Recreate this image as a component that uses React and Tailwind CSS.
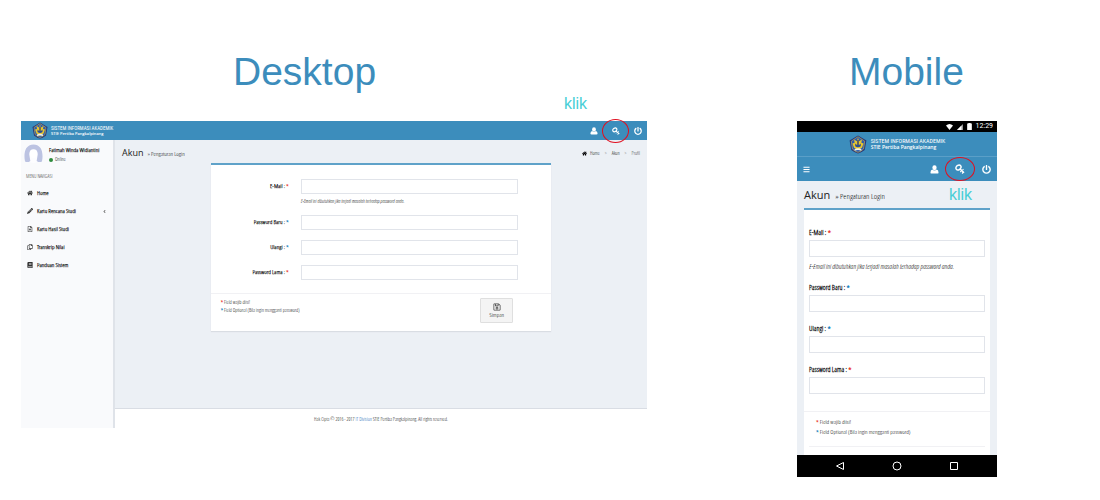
import React from "react";
import {
  FaAngleLeft, FaBars, FaBook, FaHome, FaPencilAlt, FaPowerOff,
  FaRegCopy, FaRegFileAlt, FaRegSave, FaUser,
} from "react-icons/fa";

function Emblem({ className }) {
  return (
    <svg viewBox="0 0 32 34" className={className} aria-hidden="true">
      <path d="M16 1 31 10 28 27Q22 32 16 33 10 32 4 27L1 10Z" fill="#23337a" />
      <path d="M16 3 28 11 26 25Q21 30 16 31 11 30 6 25L4 11Z" fill="#2f5cae" stroke="#c9b04e" strokeWidth="1.2" />
      <path d="M16 5 18 11 23 8 22 14 26 15 23 23 16 27 9 23 6 15 10 14 9 8 14 11Z" fill="#e8c62f" />
      <path d="M16 9v10" stroke="#2a3a6e" strokeWidth="2.500" fill="none" />
      <path d="M11 15q5 6 10 0v5q-5 4-10 0Z" fill="#2b4c94" />
      <path d="M10 25q6-3 12 0v3q-6-2-12 0Z" fill="#f3f0df" />
    </svg>
  );
}

function KeyIcon({ className }) {
  return (
    <svg viewBox="0 0 20 20" className={className} fill="none" stroke="currentColor" aria-hidden="true">
      <ellipse cx="7" cy="7" rx="5.500" ry="4.300" transform="rotate(-35 7 7)" strokeWidth="3" />
      <path d="M10 9.500 18 17.500" strokeWidth="2.800" />
      <path d="m13 13.500-2.500 2.500M16.500 16.500 14 19M15 12l2-1.500" strokeWidth="2.200" />
    </svg>
  );
}

function UserIcon({ className }) {
  return (
    <svg viewBox="0 0 20 20" className={className} fill="currentColor" aria-hidden="true">
      <ellipse cx="10" cy="6" rx="4.800" ry="5.500" />
      <path d="M5 10q5 4 10 0 4 1 4 7 0 2-3 2H4q-3 0-3-2 0-6 4-7Z" />
    </svg>
  );
}

function Avatar() {
  return (
    <svg viewBox="0 0 36 36" className="size-[19px] shrink-0" aria-hidden="true">
      <circle cx="18" cy="18" r="18" fill="#fdfdff" />
      <path d="M2 33C-1 20 1 1 18 1S37 20 34 33Q29 36 24 32L26 20Q26 10 18 10T10 20L12 32Q7 36 2 33Z" fill="#bcc3e2" />
      <path d="M11 19q0-8 7-8t7 8q-1 8-7 8t-7-8Z" fill="#fff" />
    </svg>
  );
}

function HeaderIcons({ mobile }) {
  return (
    <div className={mobile ? "flex items-center gap-[16px]" : "flex items-center gap-[13px]"}>
      <button type="button" aria-label="Profil" className={mobile ? "grid w-[10px] place-items-center" : "grid w-[9px] place-items-center"}>
        <UserIcon className={mobile ? "size-[9px]" : "size-[8px]"} />
      </button>
      <button type="button" aria-label="Pengaturan Login" className={mobile ? "relative grid w-[10px] place-items-center" : "relative grid w-[9px] place-items-center"}>
        <KeyIcon className={mobile ? "size-[10px]" : "size-[8px]"} />
        <span className={mobile
          ? "absolute -inset-x-[10px] -inset-y-[7px] rounded-[50%] border border-[#e01020]"
          : "absolute -inset-x-[9px] -inset-y-[8px] rounded-[50%] border border-[#e01020]"} />
      </button>
      <button type="button" aria-label="Keluar" className={mobile ? "grid w-[10px] place-items-center" : "grid w-[9px] place-items-center"}>
        <FaPowerOff className={mobile ? "size-[9px]" : "size-[8px]"} />
      </button>
    </div>
  );
}

function Star({ blue }) {
  return <span className={blue ? "font-[Roboto,sans-serif] font-bold text-[#0073b7]" : "font-[Roboto,sans-serif] font-bold text-[#e8230f]"}>*</span>;
}

const menu = [
  { icon: FaHome, text: "Home" },
  { icon: FaPencilAlt, text: "Kartu Rencana Studi", more: true },
  { icon: FaRegFileAlt, text: "Kartu Hasil Studi" },
  { icon: FaRegCopy, text: "Transkrip Nilai" },
  { icon: FaBook, text: "Panduan Sistem" },
];

const fields = [
  { id: "email", label: "E-Mail :", type: "email", hint: "E-Email ini dibutuhkan jika terjadi masalah terhadap password anda." },
  { id: "baru", label: "Password Baru :", type: "password", blue: true },
  { id: "ulangi", label: "Ulangi :", type: "password", blue: true },
  { id: "lama", label: "Password Lama :", type: "password" },
];

function DesktopScreen() {
  return (
    <section className="flex min-h-[307px] flex-col">
      <header className="flex h-[19px] items-center bg-[#3c8dbc] pr-[5px] pl-[11px] text-white">
        <Emblem className="h-[17px] w-[16px]" />
        <div className="ml-[3px] leading-[5px]">
          <p className="font-['Roboto_Condensed',sans-serif] text-[5px]">SISTEM INFORMASI AKADEMIK</p>
          <p className="font-['Open_Sans',sans-serif] text-[4px] font-semibold">STIE Pertiba Pangkalpinang</p>
        </div>
        <div className="ml-auto"><HeaderIcons /></div>
      </header>
      <div className="flex flex-1">
        <aside className="w-[94px] shrink-0 border-r-2 border-[#dfe3e9] bg-[#f9fafc]">
          <div className="flex gap-[6px] px-[3px] pt-[4px]">
            <Avatar />
            <div className="pt-[2px]">
              <p className="text-[6px] leading-[8px] font-bold whitespace-nowrap">Fatimah Winda Widiantini</p>
              <p className="mt-[2px] flex items-center gap-[2px] text-[5px] leading-[7px]">
                <span className="size-[4px] rounded-full bg-[#2e8b3d]" />Online
              </p>
            </div>
          </div>
          <p className="mt-[9px] pl-[5px] text-[5px] leading-[9px] text-[#333]">MENU NAVIGASI</p>
          <nav className="mt-[3px]">
            {menu.map(({ icon: Icon, text, more }) => (
              <a key={text} href="#" className="flex h-[18px] items-center gap-[4px] pr-[6px] pl-[6px] text-[6px] font-bold">
                <Icon className="size-[6px] text-[#333]" />
                <span>{text}</span>
                {more && <FaAngleLeft className="ml-auto size-[5px] text-[#666]" />}
              </a>
            ))}
          </nav>
        </aside>
        <div className="flex flex-1 flex-col bg-[#ecf0f5]">
          <div className="flex h-[23px] items-start justify-between px-[7px] pt-[7px]">
            <h2 className="flex items-baseline gap-[4px] font-['Open_Sans',sans-serif] text-[9px] leading-[12px] text-[#222]">
              Akun
              <small className="font-['Open_Sans_Condensed_Light','Open_Sans_Condensed',sans-serif] text-[6px] text-black">» Pengaturan Login</small>
            </h2>
            <nav className="flex items-center gap-[5px] text-[5px] leading-[13px]">
              <a href="#" className="flex items-center gap-[3px]"><FaHome className="size-[5px]" />Home</a>
              <span className="text-[#888]">&gt;</span>
              <a href="#">Akun</a>
              <span className="text-[#888]">&gt;</span>
              <span className="text-[#333]">Profil</span>
            </nav>
          </div>
          <form className="mx-auto w-[64%] border-t-2 border-[#5fa2c9] bg-white shadow-[0_1px_1px_#d9dde3]">
            <div className="grid gap-[10px] pt-[14px] pr-[33px] pb-[13px]">
              {fields.map((f) => (
                <div key={f.id} className="grid grid-cols-[78px_1fr] gap-x-[12px]">
                  <label htmlFor={"d-" + f.id} className="text-right text-[6px] leading-[14px] font-bold">
                    {f.label} <Star blue={f.blue} />
                  </label>
                  <input id={"d-" + f.id} type={f.type} className="h-[15px] w-full min-w-0 border border-[#e1e4ea] bg-white px-1 text-[5px]" />
                  {f.hint && <p className="col-start-2 mt-[3px] text-[5px] leading-[8px] italic">{f.hint}</p>}
                </div>
              ))}
            </div>
            <div className="flex items-start justify-between border-t border-[#f1f1f4] pt-[4px] pr-[38px] pb-[8px] pl-[10px]">
              <div className="text-[5px] leading-[8px]">
                <p><Star /> Field wajib diisi!</p>
                <p><Star blue /> Field Optional (Bila ingin mengganti password)</p>
              </div>
              <button type="button" className="flex h-[25px] w-[33px] flex-col items-center justify-center gap-px rounded-[1px] border border-[#dfdfdf] bg-[#f4f4f4] text-[6px] leading-[7px]">
                <FaRegSave className="size-[8px] text-[#444]" />
                Simpan
              </button>
            </div>
          </form>
          <footer className="mt-auto h-[20px] border-t border-[#d9dde4] bg-white text-center text-[5px] leading-[21px]">
            Hak Cipta © 2016 - 2017 <a href="#" className="text-[#0a5cb0]">IT Division</a> STIE Pertiba Pangkalpinang. All rights reserved.
          </footer>
        </div>
      </div>
    </section>
  );
}

function MobileScreen() {
  return (
    <section>
      <div className="flex h-[11px] items-center justify-end gap-[4px] bg-black pr-[4px] font-[Roboto,sans-serif] text-[7px] leading-[11px] text-white">
        <svg viewBox="0 0 14 12" className="h-[6px] w-[7px]" aria-hidden="true"><path d="M0 3Q7-3 14 3L7 12Z" fill="#fff" /></svg>
        <svg viewBox="0 0 12 12" className="size-[6px]" aria-hidden="true"><path d="M12 0v12H0Z" fill="#999" /><path d="M9 3v9H0Z" fill="#fff" /></svg>
        <svg viewBox="0 0 8 12" className="h-[7px] w-[5px]" aria-hidden="true"><path d="M0 1h2V0h4v1h2v11H0Z" fill="#fff" /></svg>
        <span>12:29</span>
      </div>
      <header className="bg-[#3c8dbc] text-white">
        <div className="flex h-[25px] items-center justify-center gap-[4px] border-b border-[#5a9fc8]">
          <Emblem className="h-[19px] w-[18px]" />
          <div className="leading-[7px]">
            <p className="font-['Roboto_Condensed',sans-serif] text-[6px]">SISTEM INFORMASI AKADEMIK</p>
            <p className="font-['Open_Sans',sans-serif] text-[5px] font-semibold">STIE Pertiba Pangkalpinang</p>
          </div>
        </div>
        <div className="flex h-[24px] items-center justify-between px-[6px]">
          <button type="button" aria-label="Menu"><FaBars className="size-[7px]" /></button>
          <HeaderIcons mobile />
        </div>
      </header>
      <main className="bg-[#ecf0f5] px-[7px]">
        <div className="flex h-[27px] items-center justify-between pr-[18px]">
          <h2 className="flex items-baseline gap-[5px] font-['Open_Sans',sans-serif] text-[11px] leading-[15px] text-[#222]">
            Akun
            <small className="font-['Open_Sans_Condensed_Light','Open_Sans_Condensed',sans-serif] text-[8px] text-black">» Pengaturan Login</small>
          </h2>
          <span className="font-['Liberation_Sans',sans-serif] text-[16px] leading-[20px] text-[#48ced6]">klik</span>
        </div>
        <form className="border-t-2 border-[#5fa2c9] bg-white px-[5px] pt-[18px]">
          <div className="grid gap-[12px]">
            {fields.map((f) => (
              <div key={f.id}>
                <label htmlFor={"m-" + f.id} className="block text-[7px] leading-[10px] font-bold">
                  {f.label} <Star blue={f.blue} />
                </label>
                <input id={"m-" + f.id} type={f.type} className="mt-[2px] block h-[17px] w-full min-w-0 border border-[#e1e4ea] bg-white px-1 text-[6px]" />
                {f.hint && <p className="mt-[5px] text-[7px] leading-[9px] italic">{f.hint}</p>}
              </div>
            ))}
          </div>
          <div className="-mx-[5px] mt-[17px] border-t border-[#f1f1f4]" />
          <div className="border-b border-[#f1f1f4] px-[7px] pt-[5px] pb-[9px] text-[6px] leading-[10px]">
            <p><Star /> Field wajib diisi!</p>
            <p><Star blue /> Field Optional (Bila ingin mengganti password)</p>
          </div>
          <div className="h-[8px]" />
        </form>
      </main>
      <nav className="flex h-[22px] items-center justify-between bg-black px-[38px] text-white">
        <button type="button" aria-label="Kembali">
          <svg viewBox="0 0 20 20" className="size-[10px]"><path d="M17 3v14L3 10Z" fill="none" stroke="#fff" strokeWidth="2" /></svg>
        </button>
        <button type="button" aria-label="Beranda">
          <svg viewBox="0 0 20 20" className="size-[10px]"><circle cx="10" cy="10" r="8" fill="none" stroke="#fff" strokeWidth="2" /></svg>
        </button>
        <button type="button" aria-label="Aplikasi">
          <svg viewBox="0 0 20 20" className="size-[10px]"><path d="M3 3h14v14H3Z" fill="none" stroke="#fff" strokeWidth="2" /></svg>
        </button>
      </nav>
    </section>
  );
}

export default function App() {
  return (
    <div className="grid min-h-screen grid-cols-[1fr_200px] content-start items-start gap-x-[150px] bg-white pt-[52px] pr-[103px] pl-[21px] font-['Open_Sans_Condensed_Light','Open_Sans_Condensed',sans-serif] text-black">
      <h1 className="pl-[212px] font-['Liberation_Sans',sans-serif] text-[39px] leading-[40px] text-[#3c8dbc]">Desktop</h1>
      <h1 className="pl-[52px] font-['Liberation_Sans',sans-serif] text-[39px] leading-[40px] text-[#3c8dbc]">Mobile</h1>
      <p className="col-span-2 h-[29px] pt-[2px] pl-[543px] font-['Liberation_Sans',sans-serif] text-[16px] leading-[20px] text-[#48ced6]">klik</p>
      <DesktopScreen />
      <MobileScreen />
    </div>
  );
}
